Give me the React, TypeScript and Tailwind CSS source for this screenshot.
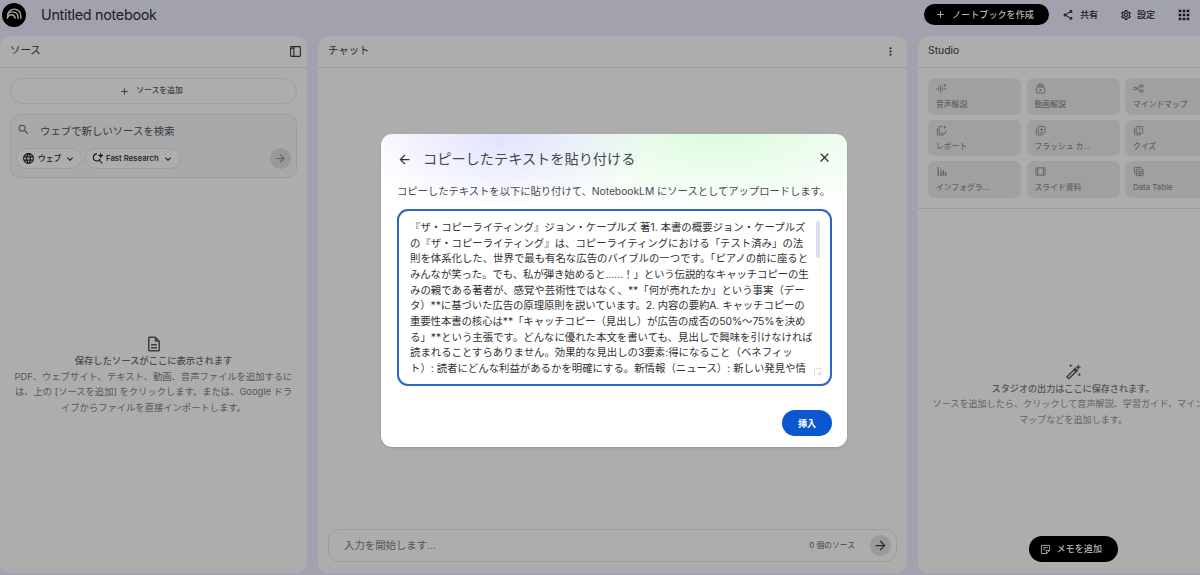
import type { ReactNode } from "react";
import {
  MdAdd,
  MdApps,
  MdArrowBack,
  MdArrowForward,
  MdClose,
  MdKeyboardArrowDown,
  MdLanguage,
  MdMoreVert,
  MdOutlineDescription,
  MdOutlineSettings,
  MdOutlineShare,
  MdSearch,
} from "react-icons/md";

function Icon({ children, className = "h-[11px] w-[11px]" }: { children: ReactNode; className?: string }) {
  return (
    <svg
      viewBox="0 0 24 24"
      fill="none"
      stroke="currentColor"
      strokeWidth={2}
      className={className}
    >
      {children}
    </svg>
  );
}

const sparkle = "M19 1l1.2 2.8L23 5l-2.8 1.2L19 9l-1.2-2.8L15 5l2.8-1.2z";

const tools = [
  {
    label: "音声解説",
    icon: (
      <Icon>
        <path d="M2 11v4M6 9v8M10 4v18M14 9v8M18 11v4M22 12v2" />
        <path d={sparkle} fill="currentColor" stroke="none" />
      </Icon>
    ),
  },
  {
    label: "動画解説",
    icon: (
      <Icon>
        <rect x="3" y="9" width="18" height="13" rx="2" />
        <path d="M4 5.5h16M7 2h10" />
        <path d="M10 12v7l5.500-3.500z" fill="currentColor" stroke="none" />
      </Icon>
    ),
  },
  {
    label: "マインドマップ",
    icon: (
      <Icon>
        <rect x="1.500" y="9.500" width="6" height="5" rx="1" />
        <rect x="16" y="4" width="6" height="5" rx="1" />
        <rect x="16" y="15" width="6" height="5" rx="1" />
        <path d="M7.500 12h3l3-5.500H16M10.500 12l3 5.500H16" />
      </Icon>
    ),
  },
  {
    label: "レポート",
    icon: (
      <Icon>
        <path d="M14 3H8a1 1 0 0 0-1 1v13a1 1 0 0 0 1 1h12a1 1 0 0 0 1-1v-6" />
        <path d="M3 7v14a1 1 0 0 0 1 1h13" />
        <path d={sparkle} fill="currentColor" stroke="none" />
      </Icon>
    ),
  },
  {
    label: "フラッシュ カ...",
    icon: (
      <Icon>
        <rect x="7" y="3" width="15" height="14" rx="1.500" />
        <path d="M3 8v12a1.500 1.500 0 0 0 1.500 1.500H18" />
        <path d="M14.500 5.500l1.300 3.200L19 10l-3.200 1.300-1.300 3.200-1.300-3.200L10 10l3.200-1.300z" fill="currentColor" stroke="none" />
      </Icon>
    ),
  },
  {
    label: "クイズ",
    icon: (
      <Icon>
        <rect x="7" y="3" width="14" height="15" rx="1.500" />
        <path d="M3 7v13a1.500 1.500 0 0 0 1.500 1.500H17" />
        <path d="M12 7.500c.5-2 4-2 4 .3 0 1.700-2 1.700-2 3.700M14 13v2" strokeWidth={1.7} />
      </Icon>
    ),
  },
  {
    label: "インフォグラ...",
    icon: (
      <Icon>
        <path d="M5 8v13M11 12v9M16 9v12M21 13v8" strokeWidth={3.2} />
        <circle cx="5" cy="4.500" r="2" fill="currentColor" stroke="none" />
        <circle cx="11" cy="8" r="1.700" fill="currentColor" stroke="none" />
      </Icon>
    ),
  },
  {
    label: "スライド資料",
    icon: (
      <Icon>
        <rect x="2" y="4" width="20" height="16" rx="1" />
        <path d="M6 4v16M18 4v16" />
      </Icon>
    ),
  },
  {
    label: "Data Table",
    icon: (
      <Icon>
        <rect x="7" y="7" width="15" height="14" rx="1" />
        <path d="M3 17V4a1 1 0 0 1 1-1h14M7 12h15M7 16.500h15M14.500 12v9" />
      </Icon>
    ),
  },
];

const pastedLines = [
  { text: "『ザ・コピーライティング』ジョン・ケープルズ 著1. 本書の概要ジョン・ケープルズ" },
  { text: "の『ザ・コピーライティング』は、コピーライティングにおける「テスト済み」の法" },
  { text: "則を体系化した、世界で最も有名な広告のバイブルの一つです。「ピアノの前に座ると" },
  { text: "みんなが笑った。でも、私が弾き始めると......！」という伝説的なキャッチコピーの生", tight: true },
  { text: "みの親である著者が、感覚や芸術性ではなく、**「何が売れたか」という事実（デー" },
  { text: "タ）**に基づいた広告の原理原則を説いています。2. 内容の要約A. キャッチコピーの", tight: true },
  { text: "重要性本書の核心は**「キャッチコピー（見出し）が広告の成否の50%〜75%を決め", tight: true },
  { text: "る」**という主張です。どんなに優れた本文を書いても、見出しで興味を引けなければ" },
  { text: "読まれることすらありません。効果的な見出しの3要素:得になること（ベネフィッ" },
  { text: "ト）: 読者にどんな利益があるかを明確にする。新情報（ニュース）: 新しい発見や情" },
];

function Header() {
  return (
    <header className="flex h-9 shrink-0 items-start pl-[2px] text-[#16181c]">
      <div className="mt-[3px] flex h-6 w-6 items-center justify-center rounded-full bg-black">
        <svg viewBox="0 0 24 24" fill="none" stroke="#a8a8a8" strokeWidth={1.4} className="h-6 w-6">
          <path d="M5.500 15.800v-2.300C5.500 3.700 18.900 3.700 18.900 13.500v2.300" />
          <path d="M5.500 11.300C8.200 7.200 16 8.600 16 14v1.800" />
          <path d="M5.500 14.500C7.500 10.200 13.100 11.200 13.100 15.800" />
        </svg>
      </div>
      <h1 className="ml-[15px] text-[14.4px] leading-[29px] tracking-[-0.31px] text-[#1b1d22]">
        Untitled notebook
      </h1>
      <div className="mt-[4px] ml-auto flex items-center text-[9.1px] font-medium">
        <button className="flex h-[21px] w-[125px] items-center rounded-full bg-black pl-[11px] text-[#b3b3b3]">
          <MdAdd className="mr-[6px] h-[11px] w-[11px]" />
          ノートブックを作成
        </button>
        <button className="ml-2 flex h-[21px] w-[49px] items-center rounded-full border border-[#9f9fa9] pl-[4px]">
          <MdOutlineShare className="mr-[6px] h-3 w-3" />
          共有
        </button>
        <button className="ml-2 flex h-[21px] w-[50px] items-center rounded-full border border-[#9f9fa9] pl-[5px]">
          <MdOutlineSettings className="mr-[5px] h-3 w-3" />
          設定
        </button>
        <MdApps className="mr-[36px] ml-[12px] h-4 w-4" />
      </div>
    </header>
  );
}

function PanelTitle({ children }: { children: ReactNode }) {
  return (
    <div className="flex h-8 shrink-0 items-center justify-between border-b border-[#999b9e] px-[10px] pb-px text-[10.4px] text-[#25272b]">
      {children}
    </div>
  );
}

function SourcesPanel() {
  return (
    <section className="flex w-[307px] flex-col rounded-[10px] bg-[#adadad]">
      <PanelTitle>
        ソース
        <Icon className="-mr-[5px] h-[13px] w-[13px]">
          <rect x="3" y="3" width="18" height="18" rx="1.500" />
          <path d="M9 3v18M3 6h6" />
        </Icon>
      </PanelTitle>
      <div className="px-[10px] pt-[10px]">
        <button className="flex h-[26px] w-full items-center justify-center rounded-full border border-[#9d9fa1] pr-[5px] text-[7.8px] font-medium text-[#3b3d40]">
          <MdAdd className="mr-[6px] h-[11px] w-[11px]" />
          ソースを追加
        </button>
        <div className="mt-[10px] h-[64px] rounded-[10px] border border-[#9b9ea2] bg-[#a8a9aa] px-[5px] pt-[8px]">
          <div className="flex h-4 items-center text-[10.4px] text-[#36383b]">
            <MdSearch className="-mt-[3px] mr-[10px] ml-px h-[13px] w-[13px] text-[#4b4d50]" />
            <span className="pt-px">ウェブで新しいソースを検索</span>
          </div>
          <div className="mt-[9px] flex items-center text-[7.8px] font-medium text-[#17181a]">
            <button className="flex h-[21px] w-[66px] items-center rounded-full border border-[#9b9da0] bg-[#adadad] pl-[5px]">
              <MdLanguage className="mr-[3px] h-[13px] w-[13px]" />
              <span className="pt-px">ウェブ</span>
              <MdKeyboardArrowDown className="ml-[3px] h-3 w-3" />
            </button>
            <button className="ml-[3px] flex h-[21px] w-[96px] items-center rounded-full border border-[#9b9da0] bg-[#adadad] pl-[5px]">
              <Icon className="mr-[2px] h-[13px] w-[13px]">
                <path d="M11 3.500a6.500 6.500 0 1 0 5.800 9M14.500 14.500L21 21" />
                <path d="M18 1l1.600 3.900L23.500 6.500l-3.900 1.600L18 12l-1.600-3.900-3.900-1.600 3.900-1.600z" fill="currentColor" stroke="none" />
              </Icon>
              <span className="pt-px whitespace-nowrap">Fast Research</span>
              <MdKeyboardArrowDown className="ml-[3px] h-3 w-3" />
            </button>
            <button className="ml-auto flex h-[21px] w-[21px] items-center justify-center rounded-full bg-[#979899] text-[#5f6061]">
              <MdArrowForward className="h-[13px] w-[13px]" />
            </button>
          </div>
        </div>
      </div>
      <div className="mt-[157px] flex flex-col items-center text-center text-[9.3px] leading-[15.6px] text-[#55575a]">
        <MdOutlineDescription className="h-[18px] w-[18px] text-[#3c3e42]" />
        <p className="font-medium text-[#47494d]">保存したソースがここに表示されます</p>
        <p className="whitespace-nowrap">
          PDF、ウェブサイト、テキスト、動画、音声ファイルを追加するに
          <br />
          は、上の [ソースを追加] をクリックします。または、Google ドラ
          <br />
          イブからファイルを直接インポートします。
        </p>
      </div>
    </section>
  );
}

function ChatPanel() {
  return (
    <section className="flex w-[589px] flex-col rounded-[10px] bg-[#adadad]">
      <PanelTitle>
        チャット
        <MdMoreVert className="h-[13px] w-[13px]" />
      </PanelTitle>
      <div className="mx-[10px] mt-auto mb-[11px] flex h-[33px] items-center rounded-[11px] border border-[#9b9da0] pr-[5px] pl-[15px]">
        <span className="text-[10.4px] text-[#515356]">入力を開始します...</span>
        <span className="ml-auto text-[7.8px] text-[#414346]">0 個のソース</span>
        <button className="ml-[15px] flex h-[21px] w-[21px] items-center justify-center rounded-full bg-[#999a9c] text-[#2b2d2f]">
          <MdArrowForward className="h-[15px] w-[15px]" />
        </button>
      </div>
    </section>
  );
}

function StudioPanel() {
  return (
    <section className="flex w-[310px] flex-col items-center rounded-[10px] bg-[#adadad]">
      <div className="w-full">
        <PanelTitle>Studio</PanelTitle>
        <div className="grid grid-cols-[repeat(3,93px)] gap-x-[5.500px] gap-y-[5px] border-b border-[#999b9e] px-[10px] pt-[10px] pb-[10px]">
          {tools.map((tool) => (
            <div
              key={tool.label}
              className="flex h-[36.600px] flex-col rounded-[7px] bg-[#a0a0a0] pt-[5px] pl-[8px] text-[7.8px] font-medium text-[#606163]"
            >
              {tool.icon}
              <span className="mt-[4px] leading-[13px] whitespace-nowrap">{tool.label}</span>
            </div>
          ))}
        </div>
      </div>
      <div className="mt-[154px] flex flex-col items-center text-center text-[9.1px] leading-[15.6px] text-[#606265]">
        <Icon className="h-[18px] w-[18px] text-[#404246]">
          <path d="M4 18.500L14.500 8l2.500 2.500L6.500 21z" strokeLinejoin="round" />
          <path d="M12 9l3-3 4 4-3 3z" fill="currentColor" stroke="none" />
          <path d="M19 1.500l1.200 2.800L23 5.500l-2.800 1.200L19 9.500l-1.200-2.800L15 5.500l2.800-1.200z" fill="currentColor" stroke="none" />
          <path d="M9 2l1.500 1.500L9 5 7.500 3.500zM20.500 14l1.500 1.500-1.500 1.500-1.500-1.500z" fill="currentColor" strokeWidth={1} />
        </Icon>
        <p className="font-medium text-[#505256]">スタジオの出力はここに保存されます。</p>
        <p className="whitespace-nowrap">
          ソースを追加したら、クリックして音声解説、学習ガイド、マインド
          <br />
          マップなどを追加します。
        </p>
      </div>
      <button className="mt-auto mb-[11px] flex h-[26px] w-[89px] items-center rounded-full bg-black pl-[11px] text-[9.1px] font-medium text-[#b3b3b3]">
        <Icon className="mr-[6px] h-[11px] w-[11px]">
          <path d="M3 3h18v11l-7 7H3zM21 14h-7v7M7 8h10M7 12.500h5" />
        </Icon>
        メモを追加
      </button>
    </section>
  );
}

function PasteDialog() {
  return (
    <div className="absolute inset-0 flex items-center justify-center">
      <div
        role="dialog"
        className="flex h-[313px] w-[466px] flex-col rounded-[11px] bg-white bg-[radial-gradient(ellipse_150px_75px_at_120px_0px,#e1e2fd,transparent),radial-gradient(ellipse_230px_80px_at_340px_0px,#ddfbdf,transparent)] pr-[15px] pl-4 shadow-sm"
      >
        <div className="flex h-[50px] items-center text-[#303236]">
          <MdArrowBack className="mt-px h-[15px] w-[15px]" />
          <h2 className="ml-[11px] text-[14.2px] text-[#44474d]">コピーしたテキストを貼り付ける</h2>
          <MdClose className="-mt-[3px] ml-auto h-[15px] w-[15px]" />
        </div>
        <p className="pt-px text-[10.35px] leading-[13px] tracking-[-0.05px] whitespace-nowrap text-[#494b50]">
          コピーしたテキストを以下に貼り付けて、NotebookLM にソースとしてアップロードします。
        </p>
        <div className="relative mt-[11px] h-[177px] w-[435px] shrink-0 overflow-hidden rounded-[11px] border-2 border-[#2a66c8] bg-white pt-[9px] pl-[11px] text-[10.4px] leading-[15.67px] text-[#303235]">
          {pastedLines.map(({ text, tight }) => (
            <p key={text} className={tight ? "tracking-[-0.08px] whitespace-nowrap" : "whitespace-nowrap"}>
              {text}
            </p>
          ))}
          <div className="absolute top-[10px] right-[10px] h-[37px] w-[4px] rounded-full bg-[#dcdfea]" />
          <svg
            viewBox="0 0 8 8"
            fill="none"
            stroke="#a5a5a5"
            strokeWidth={0.8}
            className="absolute right-[8px] bottom-[8px] h-2 w-2"
          >
            <path d="M.5 8V.5H8" stroke="#d8d8d8" />
            <path d="M4 7l3-3M6 7l1-1" />
          </svg>
        </div>
        <button className="mt-[24px] h-[26px] w-[50px] shrink-0 self-end rounded-full bg-[#0b57d0] pt-px text-[9.1px] font-bold text-white">
          挿入
        </button>
      </div>
    </div>
  );
}

export default function App() {
  return (
    <div className="h-[575px] w-[1200px] overflow-hidden">
      <div className="relative flex h-[581px] w-[1228px] flex-col bg-[#a2a2ae] font-[Inter,'Noto_Sans_CJK_JP',sans-serif]">
        <Header />
        <main className="flex h-[537px] gap-[11px]">
          <SourcesPanel />
          <ChatPanel />
          <StudioPanel />
        </main>
        <PasteDialog />
      </div>
    </div>
  );
}
